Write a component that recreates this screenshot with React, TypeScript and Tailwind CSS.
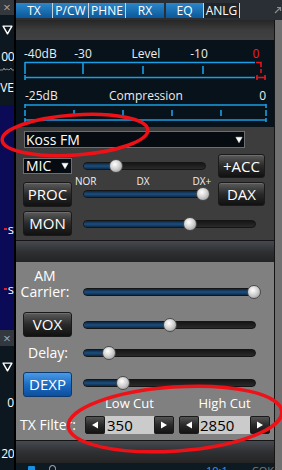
import React from 'react'

// Transmit panel of the radio console (TX tab)

function Tri({ down = true, outline = false, className = '' }: { down?: boolean; outline?: boolean; className?: string }) {
  return (
    <svg viewBox="0 0 10 9" className={className}>
      <polygon
        points={down ? '1,1 9,1 5,8' : '1,8 9,8 5,1'}
        fill={outline ? 'none' : 'currentColor'}
        stroke="currentColor"
        strokeWidth={outline ? 1.3 : 0.5}
        strokeLinejoin="round"
      />
    </svg>
  )
}

function Slider({ width, thumb }: { width: number; thumb: number }) {
  return (
    <div className="relative h-[8px] shrink-0 rounded-full border border-[#151515] bg-linear-to-b from-[#161616] to-[#2a2a2a]" style={{ width }}>
      <div
        className="absolute left-0 top-0 bottom-0 rounded-full bg-linear-to-b from-[#0b2640] via-[#1f4e7e] to-[#0d2b48]"
        style={{ width: thumb }}
      />
      <div
        className="absolute top-[-4px] h-[14px] w-[14px] rounded-full border border-[#4a4a4a] bg-[radial-gradient(circle_at_40%_35%,#ffffff,#d2d2d2_45%,#8e8e8e)]"
        style={{ left: thumb - 7 }}
      />
    </div>
  )
}

function Btn({ label, w = 49, h = 25, blue = false, ml = 0 }: { label: string; w?: number; h?: number; blue?: boolean; ml?: number }) {
  return (
    <div
      className={`flex shrink-0 items-center justify-center rounded-[3px] border text-[15px] leading-none text-white ${
        blue
          ? 'border-[#0b3a70] bg-linear-to-b from-[#4a9ae6] via-[#1c6cc4] to-[#0d4f9c]'
          : 'border-[#1a1a1a] bg-linear-to-b from-[#5c5c5c] via-[#2a2a2a] to-[#111111] shadow-[inset_0_1px_0_rgba(255,255,255,0.12)]'
      }`}
      style={{ width: w, height: h, marginLeft: ml }}
    >
      {label}
    </div>
  )
}

function Arrow({ left }: { left?: boolean }) {
  return (
    <div className="flex h-[18px] w-[20px] shrink-0 items-center justify-center rounded-[2px] border border-[#1a1a1a] bg-linear-to-b from-[#555555] via-[#2a2a2a] to-[#141414]">
      <svg viewBox="0 0 8 8" className="h-[8px] w-[8px] text-white">
        <polygon points={left ? '7,0.5 7,7.5 1,4' : '1,0.5 1,7.5 7,4'} fill="currentColor" />
      </svg>
    </div>
  )
}

function Tab({ label, w, on, border = true }: { label: string; w: number; on: boolean; border?: boolean }) {
  return (
    <div
      className={`h-[15px] shrink-0 text-center text-[12px] leading-[15px] text-white ${border ? 'border-r border-[#c9d2da]' : ''} ${
        on ? 'bg-linear-to-b from-[#2a88cc] to-[#0b5898]' : 'bg-[#1f2429]'
      }`}
      style={{ width: w }}
    >
      {label}
    </div>
  )
}

function Header({ h }: { h: number }) {
  return <div className="shrink-0 border-t border-[#151515] bg-linear-to-b from-[#464a50] via-[#2f3033] to-[#242424]" style={{ height: h }} />
}

export default function App() {
  return (
    <div className="relative flex h-[470px] w-[282px] overflow-hidden bg-black font-['Open_Sans',sans-serif]">
      {/* Left strip (neighbouring panel, clipped) */}
      <div className="flex w-[14px] shrink-0 flex-col overflow-hidden">
        <div className="flex h-[15px] items-center justify-center bg-[#33383e] text-[13px] leading-[15px] text-[#a8a8a8]">×</div>
        <div className="flex h-[90px] flex-col items-center bg-[#0c1720]">
          <Tri outline className="mt-[10px] h-[10px] w-[11px] text-white" />
          <div className="mt-[15px] w-full text-right text-[12px] leading-[14px] tracking-[-0.5px] text-white">00</div>
          <svg viewBox="0 0 14 4" className="mt-[3px] h-[4px] w-[14px]">
            <polyline points="0,3 3,3 4,1 5,3 7,2 9,3 11,1 12,3 14,3" fill="none" stroke="#8a8a8a" strokeWidth="1" />
          </svg>
          <div className="mt-[10px] w-full text-right text-[12px] leading-[14px] text-white">VE</div>
        </div>
        <div className="flex h-[225px] flex-col bg-[#0a0a56]">
          <div className="mt-[117px] flex items-center justify-end text-[13px] leading-[14px] text-white">
            <span className="mr-[1px] h-[2px] w-[3px] bg-[#e0202a]" />s
          </div>
          <div className="mt-[46px] flex items-center justify-end text-[13px] leading-[14px] text-white">
            <span className="mr-[1px] h-[2px] w-[3px] bg-[#e0202a]" />s
          </div>
        </div>
        <div className="flex h-[16px] items-center justify-center bg-[#33383e] text-[13px] leading-[16px] text-[#a8a8a8]">×</div>
        <div className="flex flex-1 flex-col items-center bg-[#0c1720]">
          <Tri outline className="mt-[16px] h-[10px] w-[11px] text-white" />
          <div className="mt-[24px] w-full text-right text-[12px] leading-[14px] text-white">0</div>
          <div className="mt-[37px] w-full text-right text-[12px] leading-[14px] tracking-[-0.5px] text-white">20</div>
        </div>
      </div>
      <div className="w-[2px] shrink-0 bg-black" />

      {/* Main TX panel */}
      <div className="flex w-[258px] shrink-0 flex-col">
        {/* Tabs */}
        <div className="flex h-[20px] shrink-0 items-start bg-[#2a2f35] pt-[3px]">
          <Tab label="TX" w={37} on />
          <Tab label="P/CW" w={36} on />
          <Tab label="PHNE" w={37} on />
          <Tab label="RX" w={38} on border={false} />
          <div className="w-[2px]" />
          <Tab label="EQ" w={38} on />
          <Tab label="ANLG" w={36} on={false} />
        </div>

        <div className="h-[20px] shrink-0 bg-linear-to-b from-[#262626] via-[#3c3c3c] to-[#414141]" />

        {/* Meters */}
        <div className="flex h-[87px] shrink-0 flex-col bg-[#07121a] text-[12px] leading-[14px] text-[#ececec]">
          <div className="mt-[7px] flex h-[14px]">
            <span className="ml-[8px] w-[33px]">-40dB</span>
            <span className="ml-[14px] w-[24px] text-center">-30</span>
            <span className="ml-[33px] w-[36px] text-center">Level</span>
            <span className="ml-[23px] w-[24px] text-center">-10</span>
            <span className="ml-[40px] w-[10px] text-center text-[#ff1a1a]">0</span>
          </div>
          <svg width="258" height="20" className="shrink-0">
            <g stroke="#1a9ee6" strokeWidth="1.6" fill="none">
              <line x1="9" y1="1.5" x2="239" y2="1.5" />
              <line x1="9" y1="1" x2="9" y2="13" />
              <line x1="67" y1="1" x2="67" y2="13" />
              <line x1="127" y1="5" x2="127" y2="13" />
              <line x1="187" y1="5" x2="187" y2="13" />
              <line x1="9" y1="16.5" x2="239" y2="16.5" />
              <line x1="9" y1="14" x2="9" y2="19" />
            </g>
            <g stroke="#e8141c" strokeWidth="1.6" fill="none">
              <polyline points="240,1.5 245,1.5 245,6" />
              <line x1="245" y1="8" x2="245" y2="12" />
              <polyline points="240,16.5 250,16.5" />
              <line x1="241" y1="14" x2="241" y2="19" />
              <line x1="249" y1="14" x2="249" y2="19" />
            </g>
          </svg>
          <div className="mt-[8px] flex h-[14px]">
            <span className="ml-[9px] w-[35px]">-25dB</span>
            <span className="ml-[48px] w-[76px] text-center">Compression</span>
            <span className="ml-[60px] w-[22px] text-right">0</span>
          </div>
          <svg width="258" height="20" className="shrink-0">
            <g stroke="#1a9ee6" strokeWidth="1.6" fill="none">
              <line x1="9" y1="2" x2="250" y2="2" />
              <line x1="9" y1="1" x2="9" y2="5" />
              <line x1="250" y1="1" x2="250" y2="5" />
              <line x1="9" y1="7" x2="9" y2="13" />
              <line x1="58" y1="7" x2="58" y2="13" />
              <line x1="107" y1="7" x2="107" y2="13" />
              <line x1="156" y1="7" x2="156" y2="13" />
              <line x1="205" y1="7" x2="205" y2="13" />
              <line x1="250" y1="7" x2="250" y2="13" />
              <line x1="9" y1="17" x2="250" y2="17" />
              <line x1="9" y1="15" x2="9" y2="19" />
              <line x1="250" y1="15" x2="250" y2="19" />
            </g>
          </svg>
        </div>

        {/* Profile, mic and processor */}
        <div className="flex h-[113px] shrink-0 flex-col bg-[#3d3d3d] pt-[4px] text-white">
          <div className="ml-[8px] flex h-[17px] w-[221px] items-center justify-between border border-[#6e6e6e] bg-[#050b10] pr-[1px] pl-[1px]">
            <span className="text-[14px] leading-none">Koss FM</span>
            <Tri className="h-[8px] w-[8px] text-white" />
          </div>
          <div className="mt-[6px] flex h-[24px] items-center">
            <div className="ml-[7px] flex h-[16px] w-[49px] items-center justify-between border border-[#6e6e6e] bg-[#050b10] pr-[2px] pl-[2px]">
              <span className="text-[14px] leading-none">MIC</span>
              <Tri className="h-[8px] w-[8px] text-white" />
            </div>
            <div className="ml-[11px]">
              <Slider width={123} thumb={32} />
            </div>
            <Btn label="+ACC" w={47} h={24} ml={12} />
          </div>
          <div className="mt-[4px] flex h-[25px] items-start">
            <Btn label="PROC" ml={7} />
            <div className="-mt-[5px] ml-[11px] flex w-[126px] flex-col">
              <div className="-ml-[8px] flex h-[9px] text-[10px] leading-[9px] text-[#f0f0f0]">
                <span className="w-[22px]">NOR</span>
                <span className="ml-[40px] w-[14px]">DX</span>
                <span className="ml-[43px] w-[22px]">DX+</span>
              </div>
              <div className="mt-[4px]">
                <Slider width={126} thumb={119} />
              </div>
            </div>
            <Btn label="DAX" w={47} h={24} ml={9} />
          </div>
          <div className="mt-[4px] flex h-[25px] items-center">
            <Btn label="MON" ml={7} />
            <div className="ml-[11px]">
              <Slider width={173} thumb={106} />
            </div>
          </div>
        </div>

        <Header h={22} />

        {/* AM carrier, VOX, DEXP and filter */}
        <div className="flex h-[178px] shrink-0 flex-col bg-[#808080] text-[14px] text-white">
          <div className="mt-[6px] flex items-end">
            <div className="ml-[4px] w-[50px] text-center leading-[16px]">
              <div>AM</div>
              <div>Carrier:</div>
            </div>
            <div className="mb-[4px] ml-[13px]">
              <Slider width={173} thumb={170} />
            </div>
          </div>
          <div className="mt-[12px] flex h-[25px] items-center">
            <Btn label="VOX" ml={7} />
            <div className="ml-[11px]">
              <Slider width={173} thumb={86} />
            </div>
          </div>
          <div className="mt-[8px] flex h-[16px] items-center">
            <span className="ml-[12px] w-[42px] leading-[16px]">Delay:</span>
            <div className="ml-[13px]">
              <Slider width={173} thumb={25} />
            </div>
          </div>
          <div className="mt-[11px] flex h-[25px] items-center">
            <Btn label="DEXP" blue ml={7} />
            <div className="mb-[4px] ml-[11px]">
              <Slider width={173} thumb={39} />
            </div>
          </div>
          <div className="flex h-[13px] text-[13px] leading-[13px]">
            <span className="ml-[69px] w-[89px] text-center">Low Cut</span>
            <span className="ml-[5px] w-[91px] text-center">High Cut</span>
          </div>
          <div className="mt-[6px] flex h-[18px] items-center">
            <span className="ml-[4px] w-[65px] leading-[18px]">TX Filter:</span>
            <div className="flex w-[89px] items-center">
              <Arrow left />
              <div className="h-[18px] w-[49px] bg-[#cbcbcb] pl-[2px] text-[15px] leading-[18px] text-black">350</div>
              <Arrow />
            </div>
            <div className="ml-[5px] flex w-[91px] items-center">
              <Arrow left />
              <div className="h-[18px] w-[51px] bg-[#cbcbcb] pl-[1px] text-[15px] leading-[18px] text-black">2850</div>
              <Arrow />
            </div>
          </div>
        </div>

        <Header h={23} />

        <div className="flex h-[7px] shrink-0 items-start overflow-hidden bg-[#0e1a22] text-[11px] leading-[12px]">
          <span className="mt-[3px] ml-[12px] h-[6px] w-[8px] rounded-[1px] bg-[#1a8fe0]" />
          <span className="mt-[2px] ml-[14px] h-[8px] w-[8px] rounded-full border border-[#bcbcbc]" />
          <span className="mt-[2px] ml-[150px] text-[#2a9af0]">10:1</span>
          <span className="mt-[2px] ml-[24px] text-[#7a7a7a]">COK</span>
        </div>
      </div>

      {/* Right strip */}
      <div className="flex w-[8px] shrink-0 flex-col">
        <div className="flex h-[20px] items-start bg-[#2a2f35] pt-[6px]">
          <svg viewBox="0 0 8 8" className="h-[8px] w-[8px]">
            <path d="M1 7 L6.5 1.5 M3 1.5 H6.5 V5" fill="none" stroke="#8c8c8c" strokeWidth="1.2" />
          </svg>
        </div>
        <div className="flex-1 border-l border-[#141414] bg-[#717171]" />
      </div>

      {/* Red annotation rings */}
      <svg className="pointer-events-none absolute inset-0" width="282" height="470">
        <ellipse cx="75" cy="135" rx="73" ry="20" transform="rotate(-4 75 135)" fill="none" stroke="#ee1218" strokeWidth="3.5" />
        <ellipse cx="175" cy="419" rx="107" ry="32" transform="rotate(-4 175 419)" fill="none" stroke="#ee1218" strokeWidth="3.5" />
      </svg>
    </div>
  )
}
